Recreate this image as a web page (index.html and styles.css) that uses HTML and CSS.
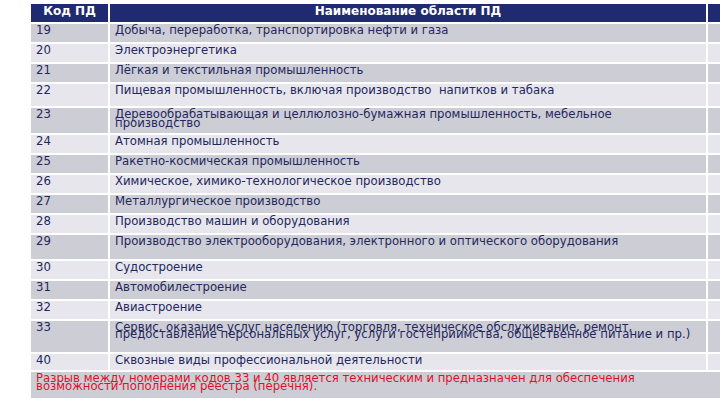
FILE: index.html
```html
<!DOCTYPE html>
<html lang="ru">
<head>
<meta charset="utf-8">
<link rel="stylesheet" href="styles.css">
</head>
<body>
<div class="page">
  <div class="table">
    <div class="row head">
      <div class="c1">Код ПД</div>
      <div class="c2">Наименование области ПД</div>
      <div class="c3"></div>
    </div>
    <div class="row dark"><div class="c1">19</div><div class="c2">Добыча, переработка, транспортировка нефти и газа</div><div class="c3"></div></div>
    <div class="row light"><div class="c1">20</div><div class="c2">Электроэнергетика</div><div class="c3"></div></div>
    <div class="row dark"><div class="c1">21</div><div class="c2">Лёгкая и текстильная промышленность</div><div class="c3"></div></div>
    <div class="row light h22"><div class="c1">22</div><div class="c2">Пищевая промышленность, включая производство&nbsp; напитков и табака</div><div class="c3"></div></div>
    <div class="row dark h23 wrap"><div class="c1">23</div><div class="c2">Деревообрабатывающая и целлюлозно-бумажная промышленность, мебельное<br>производство</div><div class="c3"></div></div>
    <div class="row light"><div class="c1">24</div><div class="c2">Атомная промышленность</div><div class="c3"></div></div>
    <div class="row dark"><div class="c1">25</div><div class="c2">Ракетно-космическая промышленность</div><div class="c3"></div></div>
    <div class="row light"><div class="c1">26</div><div class="c2">Химическое, химико-технологическое производство</div><div class="c3"></div></div>
    <div class="row dark"><div class="c1">27</div><div class="c2">Металлургическое производство</div><div class="c3"></div></div>
    <div class="row light"><div class="c1">28</div><div class="c2">Производство машин и оборудования</div><div class="c3"></div></div>
    <div class="row dark h29"><div class="c1">29</div><div class="c2">Производство электрооборудования, электронного и оптического оборудования</div><div class="c3"></div></div>
    <div class="row light"><div class="c1">30</div><div class="c2">Судостроение</div><div class="c3"></div></div>
    <div class="row dark"><div class="c1">31</div><div class="c2">Автомобилестроение</div><div class="c3"></div></div>
    <div class="row light"><div class="c1">32</div><div class="c2">Авиастроение</div><div class="c3"></div></div>
    <div class="row dark h33 wrap tight"><div class="c1">33</div><div class="c2">Сервис, оказание услуг населению (торговля, техническое обслуживание, ремонт,<br>предоставление персональных услуг, услуги гостеприимства, общественное питание и пр.)</div><div class="c3"></div></div>
    <div class="row light h40"><div class="c1">40</div><div class="c2">Сквозные виды профессиональной деятельности</div><div class="c3"></div></div>
    <div class="note">Разрыв между номерами кодов 33 и 40 является техническим и предназначен для обеспечения<br>возможности пополнения реестра (перечня).</div>
  </div>
</div>
</body>
</html>
```

FILE: styles.css
```css
html, body {
  margin: 0;
  padding: 0;
  background: #ffffff;
}
.page {
  width: 720px;
  height: 405px;
  overflow: hidden;
  padding-top: 4px;
  box-sizing: border-box;
}
.table {
  margin-left: 31px;
  width: 720px;
  display: flex;
  flex-direction: column;
  gap: 2px;
  font-family: "DejaVu Sans", Verdana, sans-serif;
  font-size: 11.7px;
  color: #24275e;
}
.row {
  display: grid;
  grid-template-columns: 77px 596px 1fr;
  column-gap: 2px;
  height: 18px;
  line-height: 12px;
  white-space: nowrap;
}
.row > div {
  padding-left: 5px;
  overflow: hidden;
}
.row.dark > div { background: #cdcdd5; }
.row.light > div { background: #e6e6ec; }
.row.head > div {
  background: #1f2a70;
  color: #ffffff;
  font-weight: bold;
  font-size: 12px;
  line-height: 12px;
  padding-top: 1px;
  padding-left: 0;
  text-align: center;
}
.h22 { height: 22px; }
.h23 { height: 25px; }
.h29 { height: 24px; }
.h33 { height: 31px; }
.h40 { height: 16px; }
.wrap .c2 { line-height: 9px; padding-top: 2px; }
.tight .c2 { line-height: 7px; padding-top: 3px; }
.note {
  background: #cdcdd5;
  color: #e0102c;
  height: 24px;
  padding-left: 5px;
  padding-top: 2px;
  line-height: 8px;
  white-space: nowrap;
}
```
